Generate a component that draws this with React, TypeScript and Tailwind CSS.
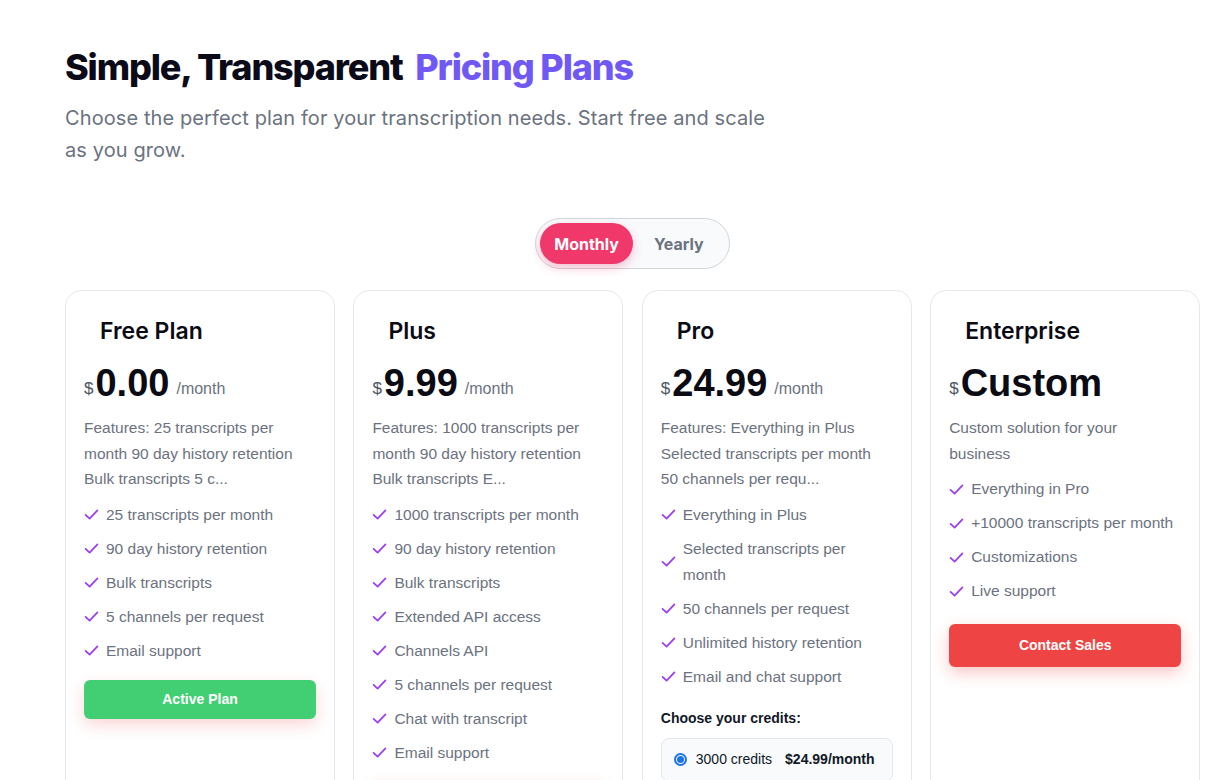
import { useState } from 'react';

type Plan = {
  name: string;
  price: string;
  unit?: string;
  desc: string[];
  features: string[];
  button?: { label: string; className: string };
  credits?: boolean;
};

const plans: Plan[] = [
  {
    name: 'Free Plan',
    price: '0.00',
    unit: '/month',
    desc: ['Features: 25 transcripts per', 'month 90 day history retention', 'Bulk transcripts 5 c...'],
    features: ['25 transcripts per month', '90 day history retention', 'Bulk transcripts', '5 channels per request', 'Email support'],
    button: { label: 'Active Plan', className: 'mt-[16px] h-[39px] bg-[#42cf74] shadow-[0_6px_16px_rgba(239,68,68,0.22)]' },
  },
  {
    name: 'Plus',
    price: '9.99',
    unit: '/month',
    desc: ['Features: 1000 transcripts per', 'month 90 day history retention', 'Bulk transcripts E...'],
    features: [
      '1000 transcripts per month',
      '90 day history retention',
      'Bulk transcripts',
      'Extended API access',
      'Channels API',
      '5 channels per request',
      'Chat with transcript',
      'Email support',
    ],
    button: { label: 'Upgrade', className: 'mt-[16px] h-[39px] bg-[#f43f5e] shadow-[0_6px_16px_rgba(244,63,94,0.3)]' },
  },
  {
    name: 'Pro',
    price: '24.99',
    unit: '/month',
    desc: ['Features: Everything in Plus', 'Selected transcripts per month', '50 channels per requ...'],
    features: [
      'Everything in Plus',
      'Selected transcripts per month',
      '50 channels per request',
      'Unlimited history retention',
      'Email and chat support',
    ],
    credits: true,
  },
  {
    name: 'Enterprise',
    price: 'Custom',
    desc: ['Custom solution for your', 'business'],
    features: ['Everything in Pro', '+10000 transcripts per month', 'Customizations', 'Live support'],
    button: { label: 'Contact Sales', className: 'mt-[20px] h-[43px] bg-[#ef4444] shadow-[0_6px_16px_rgba(239,68,68,0.3)]' },
  },
];

function Check() {
  return (
    <svg width="15" height="15" viewBox="0 0 24 24" fill="none" stroke="#9b3ef2" strokeWidth="2.8" strokeLinecap="round" strokeLinejoin="round" className="shrink-0">
      <path d="M2.5 12.5l6.5 6L21.5 5.5" />
    </svg>
  );
}

function PlanCard({ plan }: { plan: Plan }) {
  return (
    <div className="flex h-[520px] w-[270px] shrink-0 flex-col rounded-[16px] border border-[#e5e7eb] bg-white px-[18px] pt-[25px]">
      <h3 className="pl-[16px] font-['Inter'] text-[23px] font-semibold leading-[30px] text-[#0b0b14]">{plan.name}</h3>
      <div className="mt-[17px] flex items-end">
        <span className="mb-[6px] text-[17px] leading-none text-[#4b5563]">$</span>
        <span className="ml-[2px] text-[38px] font-bold leading-[40px] text-[#0b0b14]">{plan.price}</span>
        {plan.unit && <span className="mb-[6px] ml-[7px] text-[16px] leading-none text-[#6b7280]">{plan.unit}</span>}
      </div>
      <p className="mt-[12px] text-[15.5px] leading-[25.5px] text-[#6b7280]">
        {plan.desc.map((l, i) => (
          <span key={i} className="block">
            {l}
          </span>
        ))}
      </p>
      <ul className="mt-[10px] flex flex-col gap-[8px]">
        {plan.features.map((f) => (
          <li key={f} className="flex items-center gap-[7px] text-[15.5px] leading-[26px] text-[#6b7280]">
            <Check />
            <span className={f === 'Selected transcripts per month' ? 'w-[180px]' : ''}>{f}</span>
          </li>
        ))}
      </ul>
      {plan.button && (
        <button type="button" className={`w-full rounded-[6px] text-[14px] font-bold text-white ${plan.button.className}`}>
          {plan.button.label}
        </button>
      )}
      {plan.credits && (
        <div className="mt-[18px]">
          <p className="text-[14px] font-bold leading-[20px] text-[#111827]">Choose your credits:</p>
          <div className="mt-[10px] flex h-[44px] items-center gap-[9px] rounded-[8px] border border-[#e5e7eb] bg-[#f8fafc] px-[12px]">
            <span className="flex h-[13px] w-[13px] items-center justify-center rounded-full border-2 border-[#1a73e8]">
              <span className="h-[7px] w-[7px] rounded-full bg-[#1a73e8]" />
            </span>
            <span className="text-[14px] text-[#111827]">3000 credits</span>
            <span className="ml-[4px] text-[14px] font-bold text-[#111827]">$24.99/month</span>
          </div>
        </div>
      )}
    </div>
  );
}

export default function App() {
  const [period, setPeriod] = useState<'monthly' | 'yearly'>('monthly');

  return (
    <div className="h-[780px] overflow-hidden bg-white pl-[65px] pt-[44px] font-['Liberation_Sans',Arial,sans-serif]">
      <h1 className="font-['Inter'] text-[36px] font-extrabold leading-[46px] tracking-[-0.032em] text-[#0a0a18]">
        Simple, Transparent <span className="ml-[6px] text-[#7058f4]">Pricing Plans</span>
      </h1>
      <p className="mt-[12px] w-[705px] font-['Inter'] text-[20px] tracking-[0.005em] leading-[32px] text-[#6b7280]">
        Choose the perfect plan for your transcription needs. Start free and scale as you grow.
      </p>

      <div className="mt-[52px] flex w-[1135px] justify-center">
        <div className="flex items-center rounded-full border border-[#d1d5db] bg-[#f8fafc] p-[4px]">
          <button
            type="button"
            onClick={() => setPeriod('monthly')}
            className={`h-[41px] rounded-full px-[14px] font-['Inter'] text-[16px] font-bold ${
              period === 'monthly' ? 'bg-[#f0386a] text-white shadow-[0_4px_10px_rgba(240,56,106,0.3)]' : 'text-[#6b7280]'
            }`}
          >
            Monthly
          </button>
          <button
            type="button"
            onClick={() => setPeriod('yearly')}
            className={`h-[41px] rounded-full px-[21px] font-['Inter'] text-[16px] font-bold ${
              period === 'yearly' ? 'bg-[#f0386a] text-white shadow-[0_4px_10px_rgba(240,56,106,0.3)]' : 'text-[#6b7280]'
            }`}
          >
            Yearly
          </button>
        </div>
      </div>

      <div className="mt-[21px] flex gap-[18.4px]">
        {plans.map((p) => (
          <PlanCard key={p.name} plan={p} />
        ))}
      </div>
    </div>
  );
}
